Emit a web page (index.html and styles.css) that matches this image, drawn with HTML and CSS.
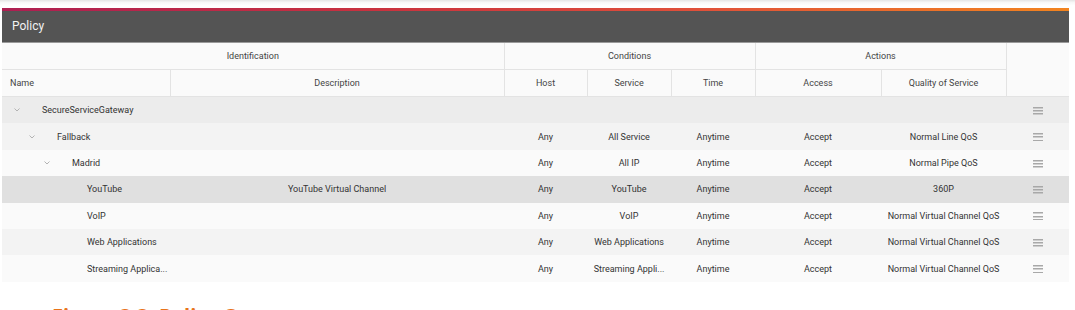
FILE: index.html
```html
<!DOCTYPE html>
<html lang="en">
<head>
    <meta charset="UTF-8">
    <title>Policy</title>
    <link rel="stylesheet" href="styles.css">
</head>
<body>
    <div class="top-shadow"></div>

    <div class="panel">
        <div class="panel-accent"></div>
        <div class="panel-title">Policy</div>

        <table class="policy-table">
            <colgroup>
                <col style="width: 168px">
                <col style="width: 334px">
                <col style="width: 83px">
                <col style="width: 84px">
                <col style="width: 84px">
                <col style="width: 126px">
                <col style="width: 125px">
                <col style="width: 63px">
            </colgroup>
            <thead>
                <tr class="group-row">
                    <th colspan="2">Identification</th>
                    <th colspan="3">Conditions</th>
                    <th colspan="2">Actions</th>
                    <th rowspan="2" class="last"></th>
                </tr>
                <tr class="col-row">
                    <th class="name-head">Name</th>
                    <th>Description</th>
                    <th>Host</th>
                    <th>Service</th>
                    <th>Time</th>
                    <th>Access</th>
                    <th>Quality of Service</th>
                </tr>
            </thead>
            <tbody>
                <tr class="row-group">
                    <td class="name lvl-0"><span class="chev"><svg width="6" height="4" viewBox="0 0 6 4"><polyline points="0.5,0.5 3,3 5.5,0.5" fill="none" stroke="#b3b3b3" stroke-width="1"/></svg></span>SecureServiceGateway</td>
                    <td></td><td></td><td></td><td></td><td></td><td></td>
                    <td class="menu"><span class="burger"></span></td>
                </tr>
                <tr class="row-mid">
                    <td class="name lvl-1"><span class="chev"><svg width="6" height="4" viewBox="0 0 6 4"><polyline points="0.5,0.5 3,3 5.5,0.5" fill="none" stroke="#b3b3b3" stroke-width="1"/></svg></span>Fallback</td>
                    <td></td>
                    <td>Any</td>
                    <td>All Service</td>
                    <td>Anytime</td>
                    <td>Accept</td>
                    <td>Normal Line QoS</td>
                    <td class="menu"><span class="burger"></span></td>
                </tr>
                <tr class="row-light">
                    <td class="name lvl-2"><span class="chev"><svg width="6" height="4" viewBox="0 0 6 4"><polyline points="0.5,0.5 3,3 5.5,0.5" fill="none" stroke="#b3b3b3" stroke-width="1"/></svg></span>Madrid</td>
                    <td></td>
                    <td>Any</td>
                    <td>All IP</td>
                    <td>Anytime</td>
                    <td>Accept</td>
                    <td>Normal Pipe QoS</td>
                    <td class="menu"><span class="burger"></span></td>
                </tr>
                <tr class="row-selected">
                    <td class="name lvl-3">YouTube</td>
                    <td>YouTube Virtual Channel</td>
                    <td>Any</td>
                    <td>YouTube</td>
                    <td>Anytime</td>
                    <td>Accept</td>
                    <td>360P</td>
                    <td class="menu"><span class="burger"></span></td>
                </tr>
                <tr class="row-light">
                    <td class="name lvl-3">VoIP</td>
                    <td></td>
                    <td>Any</td>
                    <td>VoIP</td>
                    <td>Anytime</td>
                    <td>Accept</td>
                    <td>Normal Virtual Channel QoS</td>
                    <td class="menu"><span class="burger"></span></td>
                </tr>
                <tr class="row-mid">
                    <td class="name lvl-3">Web Applications</td>
                    <td></td>
                    <td>Any</td>
                    <td>Web Applications</td>
                    <td>Anytime</td>
                    <td>Accept</td>
                    <td>Normal Virtual Channel QoS</td>
                    <td class="menu"><span class="burger"></span></td>
                </tr>
                <tr class="row-light">
                    <td class="name lvl-3">Streaming Applica...</td>
                    <td></td>
                    <td>Any</td>
                    <td>Streaming Appli...</td>
                    <td>Anytime</td>
                    <td>Accept</td>
                    <td>Normal Virtual Channel QoS</td>
                    <td class="menu"><span class="burger"></span></td>
                </tr>
            </tbody>
        </table>
    </div>

    <p class="caption">Figure 3.3: Policy C</p>
</body>
</html>
```

FILE: styles.css
```css
:root {
    --header-dark: #545454;
    --border: #e3e3e3;
    --text: #333333;
}

body {
    margin: 0;
    background: #ffffff;
    font-family: Roboto, "Liberation Sans", sans-serif;
    color: var(--text);
    overflow: hidden;
}

.top-shadow {
    height: 8px;
    background: linear-gradient(180deg, #e4e4e4 0%, #f7f7f7 30%, #ffffff 70%);
}

.panel {
    margin: 0 6px 0 2px;
}

.panel-accent {
    height: 3px;
    background: linear-gradient(90deg, #ae1f52 0%, #c9323f 35%, #e0503a 65%, #f2841f 100%);
}

.panel-title {
    height: 31px;
    background: var(--header-dark);
    color: #f2f2f2;
    font-size: 12px;
    line-height: 31px;
    padding-left: 10px;
    border-bottom: 1px solid #9a9a9a;
}

.policy-table {
    width: 1067px;
    border-collapse: collapse;
    table-layout: fixed;
    font-size: 9px;
}

.policy-table th {
    height: 26px;
    background: #fafafa;
    color: #444444;
    font-weight: 400;
    text-align: center;
    border: 1px solid var(--border);
    padding: 0;
}

.policy-table thead tr:first-child th {
    border-top: none;
}

.policy-table th:first-child {
    border-left: none;
}

.policy-table th.last {
    border-right: none;
}

.policy-table th.name-head {
    text-align: left;
    padding-left: 8px;
}

.policy-table td {
    height: 26.4px;
    padding: 0;
    text-align: center;
    white-space: nowrap;
    overflow: hidden;
}

.policy-table td.name {
    text-align: left;
}

.chev {
    display: inline-block;
    width: 6px;
    margin-right: 22px;
    vertical-align: 1px;
    line-height: 0;
}

.lvl-0 { padding-left: 12px !important; }
.lvl-1 { padding-left: 27px !important; }
.lvl-2 { padding-left: 42px !important; }
.lvl-3 { padding-left: 85px !important; }

.row-group { background: #ececec; }
.row-mid { background: #f3f3f3; }
.row-light { background: #fafafa; }
.row-selected { background: #e0e0e0; }

.burger {
    display: inline-block;
    width: 10px;
    height: 8px;
    vertical-align: middle;
    background:
        linear-gradient(#a8a8a8, #a8a8a8) 0 0 / 10px 1.5px no-repeat,
        linear-gradient(#a8a8a8, #a8a8a8) 0 3.25px / 10px 1.5px no-repeat,
        linear-gradient(#a8a8a8, #a8a8a8) 0 6.5px / 10px 1.5px no-repeat;
}

.caption {
    margin: 20px 0 0 52px;
    font-family: "Open Sans", "Liberation Sans", sans-serif;
    font-weight: 700;
    font-size: 20px;
    color: #e8731a;
}
```
